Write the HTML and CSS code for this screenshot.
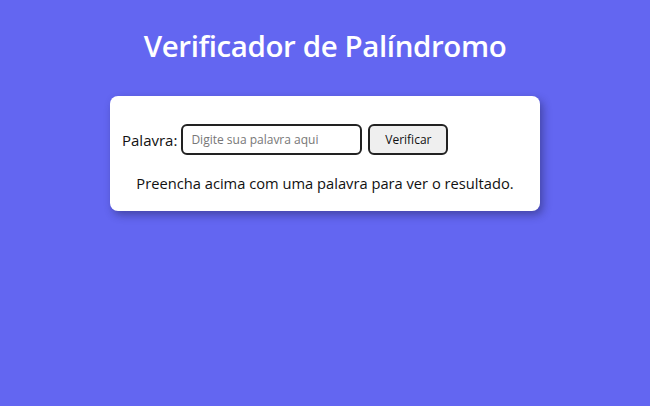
FILE: index.html
```html
<!DOCTYPE html>
<html lang="pt-BR">
<head>
<meta charset="utf-8">
<title>Verificador de Palíndromo</title>
<link rel="stylesheet" href="styles.css">
</head>
<body>
<h1 class="title">Verificador de Palíndromo</h1>
<main class="card">
  <form class="form">
    <label class="label" for="palavra">Palavra:</label>
    <input class="input" id="palavra" type="text" placeholder="Digite sua palavra aqui">
    <button class="button" type="button">Verificar</button>
  </form>
  <p class="result">Preencha acima com uma palavra para ver o resultado.</p>
</main>
</body>
</html>
```
FILE: styles.css
```css
html, body {
  margin: 0;
  padding: 0;
}
body {
  background: #6366f1;
  font-family: "Open Sans", "Noto Sans", sans-serif;
  color: #111;
  min-height: 406px;
  display: flex;
  flex-direction: column;
  align-items: center;
}
.title {
  margin: 26px 0 0;
  font-size: 29.5px;
  font-weight: 600;
  color: #fff;
  letter-spacing: -0.4px;
  line-height: 40px;
}
.card {
  margin-top: 30px;
  width: 430px;
  box-sizing: border-box;
  background: #fff;
  border-radius: 8px;
  box-shadow: 3px 4px 8px rgba(30, 30, 80, 0.45);
  padding: 28px 12px 18px;
}
.form {
  display: flex;
  align-items: center;
  gap: 4px;
}
.label {
  font-size: 15px;
  color: #111;
}
.input {
  width: 181px;
  height: 31px;
  box-sizing: border-box;
  border: 2px solid #222;
  border-radius: 6px;
  padding: 0 8px;
  margin-right: 2px;
  font-family: "Open Sans", sans-serif;
  font-size: 12px;
}
.input::placeholder {
  color: #777;
}
.button {
  width: 80px;
  height: 31px;
  box-sizing: border-box;
  border: 2px solid #222;
  border-radius: 6px;
  background: #efefef;
  font-family: "Open Sans", sans-serif;
  font-size: 12px;
  color: #111;
}
.result {
  margin: 18px 0 0;
  text-align: center;
  font-size: 14.7px;
  line-height: 20px;
}
```
